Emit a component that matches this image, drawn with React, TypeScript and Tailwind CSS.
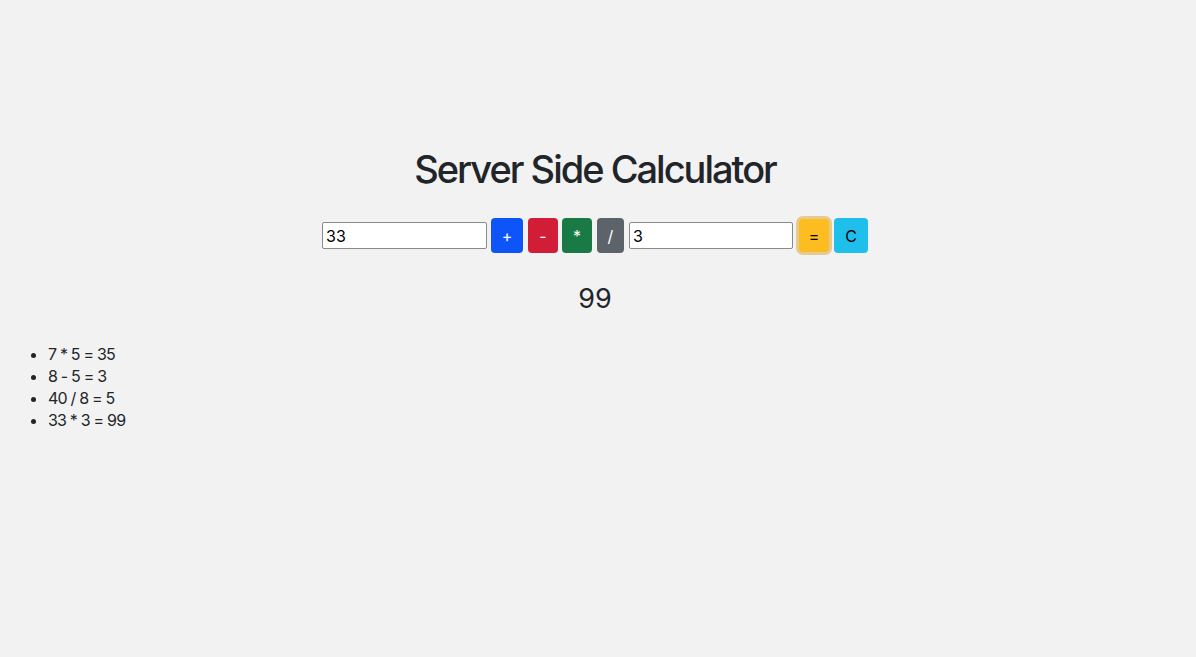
export default function App() {
  const history = ["7 * 5 = 35", "8 - 5 = 3", "40 / 8 = 5", "33 * 3 = 99"];

  return (
    <main className="min-h-[657px] bg-[#f2f2f2] text-[#212529] font-['Inter','Liberation_Sans',sans-serif] [font-feature-settings:'calt'_0]">
      <div className="pt-[145px] pr-[6px] flex flex-col items-center">
        <h1 className="text-[38px] leading-[48px] font-medium tracking-[-2px]">Server Side Calculator</h1>

        {/* calculator row */}
        <div className="mt-[25px] flex items-center">
          <input
            defaultValue="33"
            className="w-[165px] h-[27px] bg-white border border-[#8a8a8a] rounded-[2px] px-[3px] text-[16px] text-black outline-none"
          />
          <button className="ml-[4px] w-[32px] h-[35px] rounded-[4px] bg-[#0d55f9] text-white text-[16px]">+</button>
          <button className="ml-[5px] w-[30px] h-[35px] rounded-[4px] bg-[#d11d36] text-white text-[16px]">-</button>
          <button className="ml-[4px] w-[30px] h-[35px] rounded-[4px] bg-[#1a7a45] text-white text-[16px]">*</button>
          <button className="ml-[5px] w-[27px] h-[35px] rounded-[4px] bg-[#5d636a] text-white text-[16px]">/</button>
          <input
            defaultValue="3"
            className="ml-[5px] w-[164px] h-[27px] bg-white border border-[#8a8a8a] rounded-[2px] px-[3px] text-[16px] text-black outline-none"
          />
          <button className="ml-[6px] w-[30px] h-[33px] rounded-[4px] bg-[#fdbd20] text-black text-[16px] shadow-[0_0_0_3px_rgba(222,180,90,0.65)]">=</button>
          <button className="ml-[5px] w-[34px] h-[35px] rounded-[4px] bg-[#1ebfea] text-black text-[16px]">C</button>
        </div>

        <h2 className="mt-[28px] text-[27px] leading-[36px] font-normal">99</h2>
      </div>

      <ul className="mt-[26px] pl-[48px] list-disc text-[16px] leading-[22px] tracking-[-0.8px]">
        {history.map((item) => (
          <li key={item}>{item}</li>
        ))}
      </ul>
    </main>
  );
}
